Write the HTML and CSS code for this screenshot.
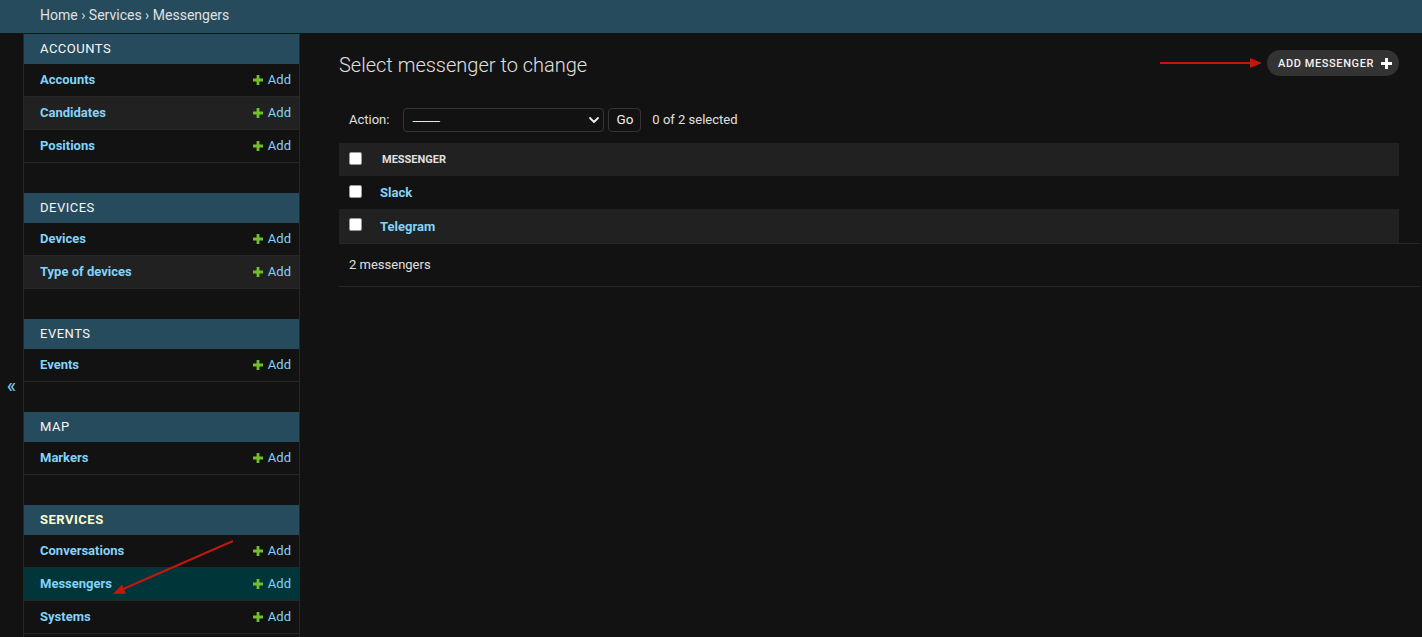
FILE: index.html
```html
<!DOCTYPE html>
<html lang="en">
<head>
<meta charset="utf-8">
<title>Select messenger to change</title>
<link rel="stylesheet" href="styles.css">
</head>
<body>
<div class="breadcrumbs">
  <a href="#">Home</a> › <a href="#">Services</a> › <span class="crumb-current">Messengers</span>
</div>
<div class="main">
  <button class="toggle-nav" type="button" aria-label="Toggle navigation">«</button>
  <nav class="sidebar">
    <div class="module">
      <div class="caption"><a href="#">Accounts</a></div>
      <div class="row"><a class="model" href="#">Accounts</a><a class="addlink" href="#"><svg viewBox="0 0 10 10" width="10" height="10"><path d="M3.6 0h2.8v3.6H10v2.8H6.4V10H3.6V6.4H0V3.6h3.6z"/></svg>Add</a></div>
      <div class="row alt"><a class="model" href="#">Candidates</a><a class="addlink" href="#"><svg viewBox="0 0 10 10" width="10" height="10"><path d="M3.6 0h2.8v3.6H10v2.8H6.4V10H3.6V6.4H0V3.6h3.6z"/></svg>Add</a></div>
      <div class="row"><a class="model" href="#">Positions</a><a class="addlink" href="#"><svg viewBox="0 0 10 10" width="10" height="10"><path d="M3.6 0h2.8v3.6H10v2.8H6.4V10H3.6V6.4H0V3.6h3.6z"/></svg>Add</a></div>
    </div>
    <div class="module">
      <div class="caption"><a href="#">Devices</a></div>
      <div class="row"><a class="model" href="#">Devices</a><a class="addlink" href="#"><svg viewBox="0 0 10 10" width="10" height="10"><path d="M3.6 0h2.8v3.6H10v2.8H6.4V10H3.6V6.4H0V3.6h3.6z"/></svg>Add</a></div>
      <div class="row alt"><a class="model" href="#">Type of devices</a><a class="addlink" href="#"><svg viewBox="0 0 10 10" width="10" height="10"><path d="M3.6 0h2.8v3.6H10v2.8H6.4V10H3.6V6.4H0V3.6h3.6z"/></svg>Add</a></div>
    </div>
    <div class="module">
      <div class="caption"><a href="#">Events</a></div>
      <div class="row"><a class="model" href="#">Events</a><a class="addlink" href="#"><svg viewBox="0 0 10 10" width="10" height="10"><path d="M3.6 0h2.8v3.6H10v2.8H6.4V10H3.6V6.4H0V3.6h3.6z"/></svg>Add</a></div>
    </div>
    <div class="module">
      <div class="caption"><a href="#">Map</a></div>
      <div class="row"><a class="model" href="#">Markers</a><a class="addlink" href="#"><svg viewBox="0 0 10 10" width="10" height="10"><path d="M3.6 0h2.8v3.6H10v2.8H6.4V10H3.6V6.4H0V3.6h3.6z"/></svg>Add</a></div>
    </div>
    <div class="module last">
      <div class="caption current-app"><a href="#">Services</a></div>
      <div class="row"><a class="model" href="#">Conversations</a><a class="addlink" href="#"><svg viewBox="0 0 10 10" width="10" height="10"><path d="M3.6 0h2.8v3.6H10v2.8H6.4V10H3.6V6.4H0V3.6h3.6z"/></svg>Add</a></div>
      <div class="row current-model"><a class="model" href="#">Messengers</a><a class="addlink" href="#"><svg viewBox="0 0 10 10" width="10" height="10"><path d="M3.6 0h2.8v3.6H10v2.8H6.4V10H3.6V6.4H0V3.6h3.6z"/></svg>Add</a></div>
      <div class="row"><a class="model" href="#">Systems</a><a class="addlink" href="#"><svg viewBox="0 0 10 10" width="10" height="10"><path d="M3.6 0h2.8v3.6H10v2.8H6.4V10H3.6V6.4H0V3.6h3.6z"/></svg>Add</a></div>
    </div>
  </nav>
  <div class="content">
    <div class="content-head">
      <h1>Select messenger to change</h1>
      <a class="object-tool" href="#">Add messenger<svg viewBox="0 0 10 10" width="11" height="11"><path d="M3.7 0h2.6v3.7H10v2.6H6.3V10H3.7V6.3H0V3.7h3.7z"/></svg></a>
    </div>
    <div class="actions">
      <label class="action-label">Action:</label>
      <span class="select-wrap">
        <select class="action-select"><option>---------</option></select>
        <svg class="chevron" viewBox="0 0 10 6" width="10" height="6"><path d="M1 1l4 4 4-4" fill="none" stroke="#eeeeee" stroke-width="1.8" stroke-linecap="round" stroke-linejoin="round"/></svg>
      </span>
      <button class="go-button" type="button">Go</button>
      <span class="action-counter">0 of 2 selected</span>
    </div>
    <table class="results">
      <thead>
        <tr>
          <th class="check-col"><input class="cb" type="checkbox"></th>
          <th class="name-col">Messenger</th>
        </tr>
      </thead>
      <tbody>
        <tr>
          <td class="check-col"><input class="cb" type="checkbox"></td>
          <th class="name-cell"><a href="#">Slack</a></th>
        </tr>
        <tr class="alt">
          <td class="check-col"><input class="cb" type="checkbox"></td>
          <th class="name-cell"><a href="#">Telegram</a></th>
        </tr>
      </tbody>
    </table>
    <p class="paginator">2 messengers</p>
  </div>
</div>
<svg class="annotations" width="1422" height="637" viewBox="0 0 1422 637" aria-hidden="true">
  <line x1="1160" y1="63" x2="1252" y2="63" stroke="#c4170c" stroke-width="2"/>
  <polygon points="1250,58 1262,63 1250,68" fill="#c4170c"/>
  <line x1="233" y1="541" x2="122" y2="589.5" stroke="#c4170c" stroke-width="2"/>
  <polygon points="113,594 126,593.7 122,584.5" fill="#c4170c"/>
</svg>
</body>
</html>
```
FILE: styles.css
```css
* { box-sizing: border-box; }

html, body {
  margin: 0;
  padding: 0;
  height: 100%;
  overflow: hidden;
}

body {
  background: #121212;
  color: #eeeeee;
  font-family: Roboto, "Liberation Sans", Arial, sans-serif;
  font-size: 14px;
  position: relative;
}

a { text-decoration: none; }

.breadcrumbs {
  background: #264b5d;
  color: #c4dce8;
  padding: 8px 40px 10px;
  font-size: 14px;
  line-height: 15px;
  height: 33px;
}

.breadcrumbs a { color: #e0e0e0; }
.crumb-current { color: #e0e0e0; }

.main {
  display: flex;
  height: calc(100% - 33px);
}

.toggle-nav {
  flex: 0 0 24px;
  width: 24px;
  border: 0;
  border-right: 1px solid #272727;
  background: #121212;
  color: #81d4fa;
  font-family: Roboto, "Liberation Sans", sans-serif;
  font-size: 20px;
  line-height: 24px;
  padding: 341px 0 0;
  margin: 0;
  display: flex;
  justify-content: center;
  align-items: flex-start;
}

.sidebar {
  flex: 0 0 276px;
  width: 276px;
  border-top: 1px solid transparent;
  border-right: 1px solid #272727;
  background: #121212;
}

.module { margin-bottom: 30px; }
.module.last { margin-bottom: 0; }

.caption {
  background: #264b5d;
  padding: 8px 16px;
  font-size: 13px;
  line-height: 14px;
  letter-spacing: 0.5px;
  text-transform: uppercase;
}

.caption a { color: #f7f7f7; }
.caption.current-app a { color: #ffffcc; font-weight: 700; }

.row {
  display: flex;
  justify-content: space-between;
  align-items: center;
  padding: 8px 8px 8px 16px;
  border-bottom: 1px solid #272727;
  line-height: 16px;
  font-size: 13px;
}

.row.alt { background: #212121; }
.row.current-model { background: #00363a; }

.model {
  color: #81d4fa;
  font-weight: 700;
}

.addlink {
  color: #81d4fa;
  display: inline-flex;
  align-items: center;
  gap: 5px;
}

.addlink svg { fill: #70bf2b; }

.content {
  flex: 1;
  min-width: 0;
  padding: 20px 23px 20px 39px;
}

.content-head {
  display: flex;
  justify-content: space-between;
  align-items: flex-start;
  margin-bottom: 21px;
}

h1 {
  margin: 0;
  font-size: 20px;
  line-height: 24px;
  font-weight: 300;
  color: #e0e0e0;
}

.object-tool {
  display: inline-flex;
  align-items: center;
  gap: 7px;
  margin-top: -3px;
  height: 26px;
  padding: 0 7px 0 11px;
  background: #333333;
  border-radius: 15px;
  color: #f2f2f2;
  font-size: 11px;
  font-weight: 500;
  letter-spacing: 0.6px;
  text-transform: uppercase;
}

.object-tool svg { fill: #ffffff; }

.actions {
  display: flex;
  align-items: center;
  padding: 10px 10px 11px;
  line-height: 24px;
  color: #e0e0e0;
  font-size: 13px;
}

.action-label { margin-right: 14px; }

.select-wrap {
  position: relative;
  display: inline-block;
  width: 201px;
  height: 24px;
}

.action-select {
  appearance: none;
  -webkit-appearance: none;
  width: 100%;
  height: 24px;
  background: #121212;
  color: #eeeeee;
  border: 1px solid #353535;
  border-radius: 4px;
  padding: 0 0 0 8px;
  font-family: Roboto, "Liberation Sans", sans-serif;
  font-size: 13px;
  letter-spacing: -0.6px;
  margin: 0;
}

.chevron {
  position: absolute;
  right: 5px;
  top: 9px;
  pointer-events: none;
}

.go-button {
  margin-left: 4px;
  height: 24px;
  padding: 0 7px;
  background: #121212;
  color: #eeeeee;
  border: 1px solid #353535;
  border-radius: 4px;
  font-family: Roboto, "Liberation Sans", sans-serif;
  font-size: 13.5px;
  line-height: 1;
}

.action-counter { margin-left: 11px; }

.results {
  width: 100%;
  border-collapse: collapse;
  font-size: 13px;
}

.results thead th {
  background: #212121;
  height: 33px;
  text-align: left;
  vertical-align: middle;
  color: #e0e0e0;
  font-size: 11px;
  font-weight: 700;
  text-transform: uppercase;
}

.results td, .results tbody th {
  height: 33px;
  vertical-align: middle;
  text-align: left;
}

.results tbody tr.alt { background: #212121; }
.results tbody tr.alt td, .results tbody tr.alt th { height: 34px; }

.check-col {
  width: 33px;
  padding: 0 10px;
}

.name-col { padding: 0 10px; }
.name-cell { padding: 0 10px 0 8px; }

.name-cell a {
  color: #81d4fa;
  font-weight: 700;
  font-size: 13px;
}

.cb {
  appearance: none;
  -webkit-appearance: none;
  display: block;
  width: 13px;
  height: 13px;
  margin: -3px 0 0;
  background: #ffffff;
  border: 1px solid #9a9a9a;
  border-radius: 2px;
}

.paginator {
  margin: 0 -21px 0 0;
  padding: 10px;
  line-height: 22px;
  font-size: 13px;
  color: #e0e0e0;
  border-top: 1px solid #272727;
  border-bottom: 1px solid #272727;
}

.annotations {
  position: absolute;
  left: 0;
  top: 0;
  pointer-events: none;
}
```
